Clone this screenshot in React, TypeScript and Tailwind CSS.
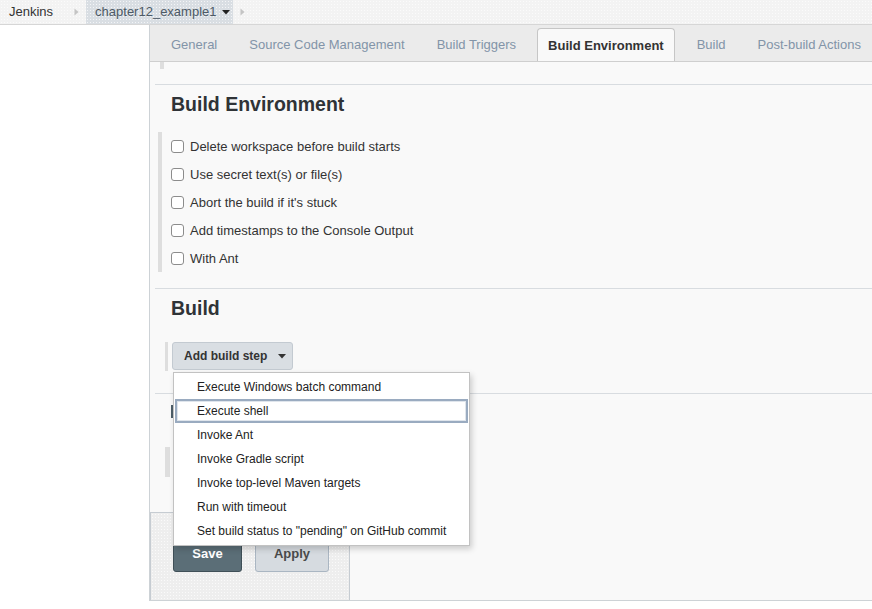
import React from 'react';

const tabs = [
  { label: 'General' },
  { label: 'Source Code Management' },
  { label: 'Build Triggers' },
  { label: 'Build Environment', active: true },
  { label: 'Build' },
  { label: 'Post-build Actions' },
];

const envOptions = [
  'Delete workspace before build starts',
  'Use secret text(s) or file(s)',
  "Abort the build if it's stuck",
  'Add timestamps to the Console Output',
  'With Ant',
];

const buildSteps = [
  'Execute Windows batch command',
  'Execute shell',
  'Invoke Ant',
  'Invoke Gradle script',
  'Invoke top-level Maven targets',
  'Run with timeout',
  'Set build status to "pending" on GitHub commit',
];

const dots =
  'bg-[radial-gradient(circle,rgba(255,255,255,0.7)_0.6px,transparent_0.8px)] bg-[length:3px_3px]';

const Caret = ({ className = '' }: { className?: string }) => (
  <svg width="8" height="5" viewBox="0 0 8 5" className={className}>
    <polygon points="0,0 8,0 4,4.5" fill="currentColor" />
  </svg>
);

const Chevron = () => (
  <svg width="5" height="8" viewBox="0 0 5 8" className="text-[#c4c4c4]">
    <polygon points="0.5,0.5 4.5,4 0.5,7.5" fill="currentColor" />
  </svg>
);

const Breadcrumb = () => (
  <div className={`flex h-[25px] items-center border-b border-[#d6d6d6] bg-[#f3f3f3] ${dots}`}>
    <span className="pl-[9px] text-[#333]">Jenkins</span>
    <span className="ml-[21px]">
      <Chevron />
    </span>
    <div className={`ml-[7px] flex h-full items-center bg-[#d9dee3] pl-[9px] pr-[3px] ${dots}`}>
      <span className="text-[#4d5a66]">chapter12_example1</span>
      <Caret className="ml-[5px] text-[#222]" />
    </div>
    <span className="ml-[7px]">
      <Chevron />
    </span>
  </div>
);

const Tabs = () => (
  <div className="flex h-[37px] shrink-0 items-end overflow-hidden whitespace-nowrap border-b border-[#cfcfcf] bg-[#ebebeb] pl-[5px]">
    {tabs.map((t) =>
      t.active ? (
        <div
          key={t.label}
          className="-mb-px ml-[5px] mr-[6px] flex h-[34px] shrink-0 items-center rounded-t-[4px] border border-b-0 border-[#c6c6c6] bg-[#f9f9f9] px-[10px] font-bold text-[#333]"
        >
          {t.label}
        </div>
      ) : (
        <div key={t.label} className="flex h-[33px] shrink-0 items-center px-[16px] text-[#8294a8]">
          {t.label}
        </div>
      )
    )}
  </div>
);

const Handle = ({ className = '' }: { className?: string }) => (
  <div className={`bg-[#dedede] ${className}`} />
);

const Checkbox = () => (
  <div className="h-[13px] w-[13px] rounded-[3px] border border-[#8c8c8c] bg-white" />
);

export default function App() {
  return (
    <div className="h-[609px] w-[872px] overflow-hidden bg-white font-['Liberation_Sans',Arial,sans-serif] text-[13px] text-[#333]">
      <Breadcrumb />
      <div className="flex">
        <div className="w-[149px] shrink-0" />
        <div className="flex h-[576px] w-[723px] flex-col border-b border-l border-[#cdd2d6] bg-[#f9f9f9]">
          <Tabs />

          <div className="h-[22px] shrink-0">
            <Handle className="ml-[10px] h-[7px] w-[4px]" />
          </div>

          {/* Build Environment */}
          <div className="ml-[5px] shrink-0 border-t border-[#d8dce0] pb-[16px] pt-[7px]">
            <h2 className="pl-[16px] text-[19.5px] font-bold leading-[24px] text-[#2f3337]">
              Build Environment
            </h2>
            <div className="mt-[16px] flex">
              <Handle className="ml-[3px] w-[4px]" />
              <div className="pl-[9px]">
                {envOptions.map((o) => (
                  <div key={o} className="flex h-[28px] items-center gap-[6px] pt-px">
                    <Checkbox />
                    <span>{o}</span>
                  </div>
                ))}
              </div>
            </div>
          </div>

          {/* Build */}
          <div className="ml-[5px] shrink-0 border-t border-[#d8dce0] pb-[22px] pt-[7px]">
            <h2 className="pl-[16px] text-[19.5px] font-bold leading-[24px] text-[#2f3337]">Build</h2>
            <div className="mt-[22px] flex h-[29px]">
              <Handle className="ml-[10px] w-[3px]" />
              <div className="relative ml-[4px]">
                <button className="flex h-[28px] w-[121px] items-center rounded-[3px] border border-[#c3cad1] bg-[#d9dee3] pl-[11px] text-[12px] font-bold text-[#333]">
                  Add build step
                  <Caret className="ml-[11px] text-[#333]" />
                </button>
                <div className="absolute left-[1px] top-[30px] z-10 w-[297px] border border-[#c2c2c2] bg-white py-[2px] text-[12px] shadow-[2px_3px_6px_rgba(0,0,0,0.18)]">
                  {buildSteps.map((s) =>
                    s === 'Execute shell' ? (
                      <div
                        key={s}
                        className="mx-[1px] flex h-[24px] items-center border-2 border-[#9aabc0] pl-[20px] text-[#222] shadow-[inset_0_0_0_1px_#dfe5ec]"
                      >
                        {s}
                      </div>
                    ) : (
                      <div key={s} className="flex h-[24px] items-center pl-[23px] text-[#222]">
                        {s}
                      </div>
                    )
                  )}
                </div>
              </div>
            </div>
          </div>

          {/* Post-build Actions: only the edge of its heading peeks out from under the menu */}
          <div className="ml-[5px] flex-1 border-t border-[#d8dce0] pt-[11px]">
            <div className="ml-[16px] h-[13px] w-[3px] bg-[#4d5f69]" />
            <div className="mt-[29px] flex h-[30px]">
              <Handle className="ml-[10px] w-[5px]" />
            </div>
          </div>

          {/* Save / Apply bar */}
          <div
            className={`flex h-[88px] w-[200px] shrink-0 gap-[13px] border-l border-r border-t border-[#c6ccd2] bg-[#eeeeee] pl-[22px] pt-[25px] ${dots}`}
          >
            <button className="h-[34px] w-[69px] rounded-[3px] border border-[#3f4f57] bg-[#5b6e77] pb-[3px] font-bold text-white">
              Save
            </button>
            <button className="h-[34px] w-[74px] rounded-[3px] border border-[#aab6c2] bg-[#d6dbe0] pb-[3px] font-bold text-[#4a4a4a]">
              Apply
            </button>
          </div>
        </div>
      </div>
    </div>
  );
}
